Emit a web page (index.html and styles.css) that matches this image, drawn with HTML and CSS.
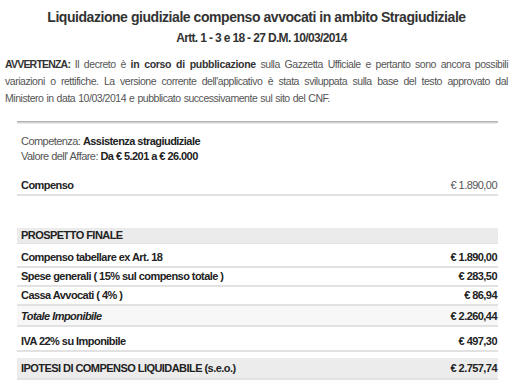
FILE: index.html
```html
<!DOCTYPE html>
<html lang="it">
<head>
<meta charset="utf-8">
<title>Liquidazione compenso</title>
<link rel="stylesheet" href="styles.css">
</head>
<body>
<h1 class="title">Liquidazione giudiziale compenso avvocati in ambito Stragiudiziale</h1>
<h2 class="subtitle">Artt. 1 - 3 e 18 - 27 D.M. 10/03/2014</h2>
<p class="warning"><strong class="warn-label">AVVERTENZA:</strong> Il decreto è <strong class="warn-em">in corso di pubblicazione</strong> sulla Gazzetta Ufficiale e pertanto sono ancora possibili variazioni o rettifiche. La versione corrente dell'applicativo è stata sviluppata sulla base del testo approvato dal Ministero in data 10/03/2014 e pubblicato successivamente sul sito del CNF.</p>
<div class="card">
  <div class="info">
    <div>Competenza: <b>Assistenza stragiudiziale</b></div>
    <div>Valore dell' Affare: <b>Da € 5.201 a € 26.000</b></div>
  </div>
  <div class="row compenso"><span class="lbl">Compenso</span><span class="val">€ 1.890,00</span></div>
  <div class="section-head">PROSPETTO FINALE</div>
  <div class="row r1"><span>Compenso tabellare ex Art. 18</span><span>€ 1.890,00</span></div>
  <div class="row"><span>Spese generali ( 15% sul compenso totale )</span><span>€ 283,50</span></div>
  <div class="row"><span>Cassa Avvocati ( 4% )</span><span>€ 86,94</span></div>
  <div class="row subtotal"><span><i>Totale Imponibile</i></span><span>€ 2.260,44</span></div>
  <div class="row iva"><span>IVA 22% su Imponibile</span><span>€ 497,30</span></div>
  <div class="row grand"><span>IPOTESI DI COMPENSO LIQUIDABILE (s.e.o.)</span><span>€ 2.757,74</span></div>
</div>
</body>
</html>
```
FILE: styles.css
```css
html, body {
  margin: 0;
  padding: 0;
  background: #fff;
}
body {
  padding: 0 4px 0 5px;
  font-family: "Liberation Sans", Arial, sans-serif;
  color: #555;
}
.title {
  margin: 8px 0 0;
  font-size: 14px;
  line-height: 18px;
  letter-spacing: -0.45px;
  font-weight: bold;
  text-align: center;
  color: #333;
}
.subtitle {
  margin: 4px 0 0;
  padding-left: 10px;
  font-size: 12px;
  line-height: 16px;
  letter-spacing: -0.65px;
  font-weight: bold;
  text-align: center;
  color: #333;
}
.warning {
  margin: 10px 0 0;
  font-size: 10.5px;
  line-height: 17px;
  letter-spacing: -0.46px;
  word-spacing: 0.5px;
  text-align: justify;
}
.warning strong {
  color: #333;
}
.warning .warn-label {
  letter-spacing: -0.8px;
}
.warning .warn-em {
  letter-spacing: -0.3px;
}
.card {
  margin: 14px 10px 0 12px;
  border-top: 1px solid #b5b5b5;
  box-shadow: inset 0 1px 0 #d0d0d0, inset 0 2px 0 #ececec;
  padding-top: 12px;
  font-size: 11px;
  letter-spacing: -0.55px;
}
.info {
  padding-left: 4px;
  line-height: 15px;
}
.info b {
  color: #222;
}
.row {
  display: flex;
  justify-content: space-between;
  padding: 0 1px 0 4px;
  line-height: 17px;
  border-bottom: 2px solid #e2e2e2;
  font-weight: bold;
  color: #222;
}
.row.compenso {
  margin-top: 12px;
  line-height: 18px;
}
.row.compenso .val {
  font-weight: normal;
  color: #555;
}
.section-head {
  margin-top: 32px;
  padding-left: 4px;
  background: #ebebeb;
  line-height: 15px;
  font-weight: bold;
  color: #222;
  border-bottom: 1px solid #e2e2e2;
}
.row.r1 {
  padding-top: 5px;
}
.row.subtotal {
  background: #f7f7f7;
  padding-top: 2px;
}
.row.iva {
  padding-top: 6px;
}
.row.grand {
  margin-top: 6px;
  background: #ececec;
  line-height: 20px;
}
```
